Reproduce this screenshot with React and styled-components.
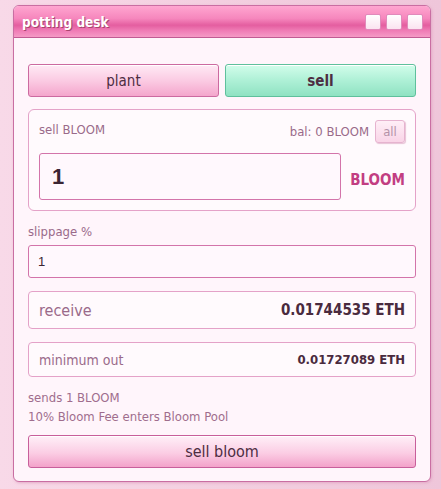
import styled, { createGlobalStyle } from 'styled-components'

const Global = createGlobalStyle`
	html, body {
		margin: 0;
		padding: 0;
	}
	body {
		width: 441px;
		height: 489px;
		overflow: hidden;
		background: linear-gradient(90deg, #f8d9e8 0%, #f3cfe0 50%, #efc6da 100%);
		font-family: Tahoma, "DejaVu Sans Condensed", "DejaVu Sans", sans-serif;
	}
`

const Page = styled.div`
	padding: 5px 10px 0 13px;
`

const Window = styled.div`
	width: 418px;
	height: 477px;
	box-sizing: border-box;
	border: 1px solid #c96ea2;
	border-radius: 6px;
	background: #fff5fb;
	overflow: hidden;
	display: flex;
	flex-direction: column;
	box-shadow: 1px 1px 3px #e4a9c7;
`

const TitleBar = styled.div`
	height: 31px;
	flex-shrink: 0;
	display: flex;
	align-items: center;
	justify-content: space-between;
	padding: 0 7px 0 8px;
	background: linear-gradient(180deg, #ffa6d0 0%, #f687bd 40%, #e45ea0 62%, #f07db6 80%, #f59ac6 100%);
	border-bottom: 1px solid #c15b93;
`

const Title = styled.div`
	color: #ffffff;
	font-weight: bold;
	font-size: 13.5px;
	text-shadow: 1px 1px 0 #a8456f;
`

const Controls = styled.div`
	display: flex;
	gap: 5px;
`

const Ctrl = styled.div`
	width: 14px;
	height: 14px;
	border: 1px solid #e08abb;
	border-radius: 2px;
	background: linear-gradient(180deg, #ffffff 0%, #fbe3f0 100%);
`

const Body = styled.div`
	flex: 1;
	display: flex;
	flex-direction: column;
	padding: 26px 14px 0 14px;
`

const Tabs = styled.div`
	display: grid;
	grid-template-columns: 1fr 1fr;
	gap: 6px;
	margin-bottom: 12px;
`

const Tab = styled.button`
	height: 33px;
	border-radius: 3px;
	font-family: inherit;
	font-size: 15px;
	color: #4d2d42;
	cursor: pointer;
	font-weight: ${p => (p.$active ? 'bold' : 'normal')};
	border: 1px solid ${p => (p.$active ? '#5fc09c' : '#cc6aa0')};
	background: ${p =>
		p.$active
			? 'linear-gradient(180deg, #d2fdeb 0%, #aef0d6 50%, #8fe2c2 100%)'
			: 'linear-gradient(180deg, #ffeaf5 0%, #fbcbe3 50%, #f4a6cc 100%)'};
	box-shadow: inset 0 1px 0 #ffffff;
`

const Card = styled.div`
	border: 1px solid #e4a2c8;
	border-radius: 6px;
	background: #fffafd;
	padding: 10px 10px 10px 10px;
	margin-bottom: 13px;
`

const CardHead = styled.div`
	display: flex;
	justify-content: space-between;
	align-items: flex-start;
	height: 33px;
`

const Label = styled.div`
	font-size: 13px;
	color: #9a6a8a;
	margin-top: ${p => p.$top || 0}px;
`

const Bal = styled.div`
	display: flex;
	align-items: center;
	gap: 6px;
	font-size: 13px;
	color: #9a6a8a;
	white-space: nowrap;
`

const AllButton = styled.button`
	width: 30px;
	height: 23px;
	padding: 0;
	font-family: inherit;
	font-size: 13px;
	color: #b492a8;
	border: 1px solid #e6b3cf;
	border-radius: 3px;
	background: linear-gradient(180deg, #ffeff7 0%, #f9d4e7 100%);
	box-shadow: 1px 1px 1px #e8c2d6;
`

const AmountRow = styled.div`
	display: flex;
	align-items: center;
	gap: 9px;
`

const BigInput = styled.input`
	flex: 1;
	min-width: 0;
	height: 47px;
	box-sizing: border-box;
	border: 1px solid #d374aa;
	border-radius: 3px;
	background: #fff8fd;
	padding: 0 12px;
	font-family: "Liberation Sans", Arial, sans-serif;
	font-size: 22px;
	font-weight: bold;
	color: #3a2533;
	outline: none;
`

const Token = styled.div`
	font-size: 15px;
	font-weight: bold;
	color: #c23e82;
	padding-top: 7px;
`

const Field = styled.div`
	display: flex;
	flex-direction: column;
	gap: 6px;
	margin-bottom: 13px;
`

const SlipInput = styled.input`
	height: 33px;
	box-sizing: border-box;
	border: 1px solid #d374aa;
	border-radius: 3px;
	background: #fff8fd;
	padding: 0 9px;
	font-family: "Liberation Sans", Arial, sans-serif;
	font-size: 13px;
	color: #3a2533;
	outline: none;
`

const Quote = styled.div`
	height: ${p => p.$h}px;
	box-sizing: border-box;
	display: flex;
	align-items: center;
	justify-content: space-between;
	padding: 0 10px;
	border: 1px solid #e4a2c8;
	border-radius: 4px;
	background: #fffafd;
	margin-bottom: 13px;
`

const QuoteLabel = styled.span`
	color: #9a6a8a;
	font-size: ${p => p.$size}px;
`

const QuoteValue = styled.span`
	color: #4a2a3e;
	font-weight: bold;
	font-size: ${p => p.$size}px;
`

const Notes = styled.div`
	display: flex;
	flex-direction: column;
	gap: 3px;
	font-size: 13px;
	line-height: 16px;
	color: #a06d8d;
	margin-bottom: 10px;
`

const Submit = styled.button`
	height: 33px;
	border: 1px solid #c85f9b;
	border-radius: 3px;
	font-family: inherit;
	font-size: 16px;
	color: #4d2d42;
	background: linear-gradient(180deg, #fff0f8 0%, #fbcde4 55%, #f3a2ca 100%);
	box-shadow: inset 0 1px 0 #ffffff;
	cursor: pointer;
`

export default function App() {
	return (
		<>
			<Global />
			<Page>
				<Window>
					<TitleBar>
						<Title>potting desk</Title>
						<Controls>
							<Ctrl />
							<Ctrl />
							<Ctrl />
						</Controls>
					</TitleBar>
					<Body>
						<Tabs>
							<Tab>plant</Tab>
							<Tab $active>sell</Tab>
						</Tabs>
						<Card>
							<CardHead>
								<Label $top={2}>sell BLOOM</Label>
								<Bal>
									bal: 0 BLOOM
									<AllButton>all</AllButton>
								</Bal>
							</CardHead>
							<AmountRow>
								<BigInput defaultValue="1" />
								<Token>BLOOM</Token>
							</AmountRow>
						</Card>
						<Field>
							<Label>slippage %</Label>
							<SlipInput defaultValue="1" />
						</Field>
						<Quote $h={38}>
							<QuoteLabel $size={16}>receive</QuoteLabel>
							<QuoteValue $size={15}>0.01744535 ETH</QuoteValue>
						</Quote>
						<Quote $h={35}>
							<QuoteLabel $size={14}>minimum out</QuoteLabel>
							<QuoteValue $size={13}>0.01727089 ETH</QuoteValue>
						</Quote>
						<Notes>
							<div>sends 1 BLOOM</div>
							<div>10% Bloom Fee enters Bloom Pool</div>
						</Notes>
						<Submit>sell bloom</Submit>
					</Body>
				</Window>
			</Page>
		</>
	)
}
